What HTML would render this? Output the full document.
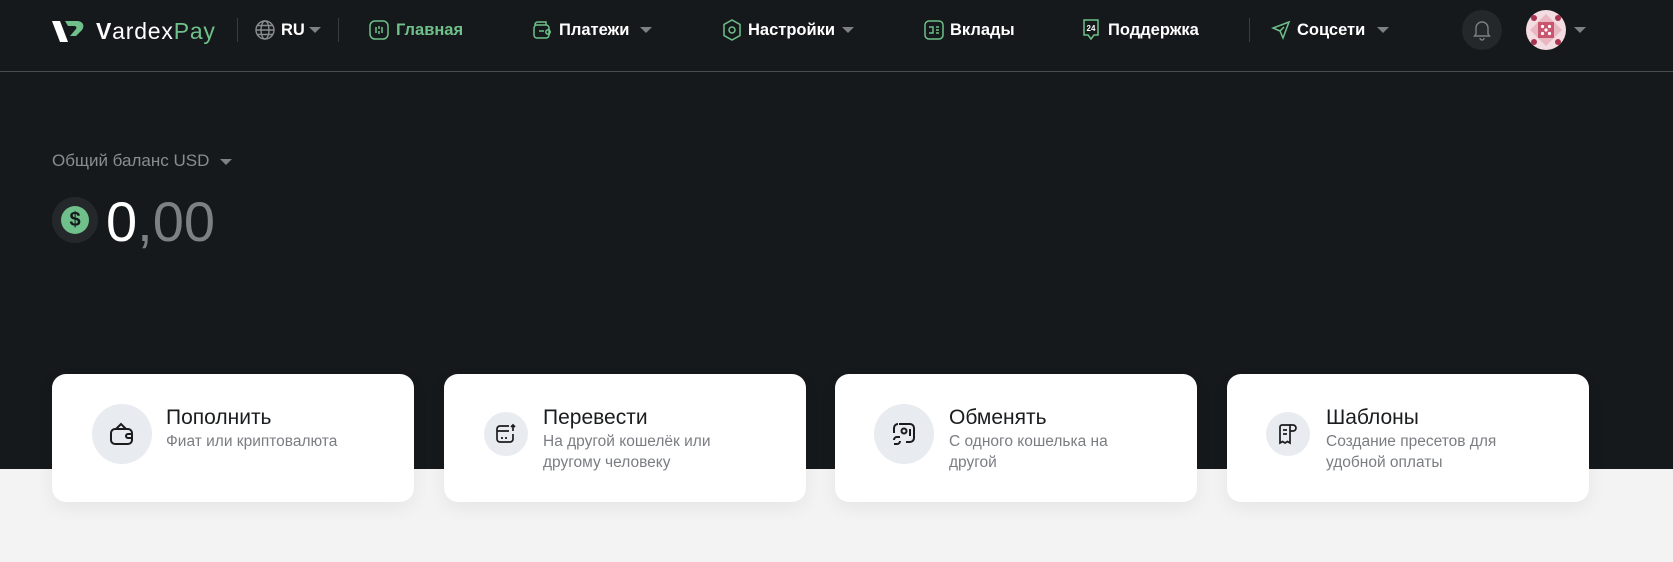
<!DOCTYPE html>
<html><head><meta charset="utf-8"><style>
*{margin:0;padding:0;box-sizing:border-box}
body{width:1673px;height:562px;overflow:hidden;background:#f3f3f3;font-family:"Liberation Sans",sans-serif;position:relative}
.dark{position:absolute;left:0;top:0;width:1673px;height:469px;background:#16191b}
.hline{position:absolute;left:0;top:71px;width:1673px;height:1px;background:#4a4d4f}
.a{position:absolute}
.nav{position:absolute;top:20px;font-size:16.5px;font-weight:bold;color:#fff;line-height:20px;white-space:nowrap}
.caret{position:absolute;top:27px;width:0;height:0;border-left:6px solid transparent;border-right:6px solid transparent;border-top:6px solid #7d8084}
.vd{position:absolute;top:18px;width:1px;height:24px;background:#3a3d40}
.card{position:absolute;top:374px;width:362px;height:128px;background:#fff;border-radius:14px;box-shadow:0 6px 18px rgba(0,0,0,.06)}
.ic{position:absolute;border-radius:50%;background:#e8ebf0;display:flex;align-items:center;justify-content:center}
.t{position:absolute;top:32px;font-size:21px;color:#1a1c1e;line-height:24px}
.s{position:absolute;top:57px;font-size:15.5px;color:#7a7d82;line-height:21px}
</style></head><body>
<div class="dark"></div>
<div class="hline"></div>
<svg class="a" style="left:51px;top:18px" width="36" height="26" viewBox="0 0 36 26"><path d="M1 3h8l8 21h-8z" fill="#fff"/><path d="M14 3h12c6 0 8 5 5 9l-6 6h-6l6-7c1-2 0-3-2-3h-6z" fill="#6fc08a"/></svg>
<div class="nav" style="left:96px;top:19px;font-size:23px;line-height:24px;font-weight:normal;letter-spacing:0.8px"><b>V</b>ardex<span style="color:#6fc08a">Pay</span></div>
<div class="vd" style="left:237px"></div>
<svg class="a" style="left:255px;top:20px" width="20" height="20" viewBox="0 0 20 20" fill="none" stroke="#8a8d90" stroke-width="1.4"><circle cx="10" cy="10" r="9"/><ellipse cx="10" cy="10" rx="4" ry="9"/><path d="M1 10h18M2.5 5.5h15M2.5 14.5h15"/></svg>
<div class="nav" style="left:281px">RU</div>
<div class="caret" style="left:309px"></div>
<div class="vd" style="left:338px"></div>
<svg class="a" style="left:369px;top:20px" width="20" height="20" viewBox="0 0 20 20" fill="none" stroke="#6fc08a" stroke-width="1.5"><rect x="1" y="1" width="18" height="18" rx="5"/><path d="M7 7v6M10 6v3M10 11v3M13 7v6"/></svg>
<div class="nav" style="left:396px;color:#6fc08a">Главная</div>
<svg class="a" style="left:532px;top:20px" width="20" height="20" viewBox="0 0 20 20" fill="none" stroke="#6fc08a" stroke-width="1.5"><path d="M3 5c0-2 1-3 3-3h8v3"/><rect x="2" y="5" width="15" height="13" rx="3"/><path d="M7 11h5"/><circle cx="16" cy="12" r="2.2"/></svg>
<div class="nav" style="left:559px">Платежи</div>
<div class="caret" style="left:640px"></div>
<svg class="a" style="left:722px;top:19px" width="20" height="22" viewBox="0 0 20 22" fill="none" stroke="#6fc08a" stroke-width="1.5"><path d="M10 1l8 4.5v11L10 21l-8-4.5v-11z"/><circle cx="10" cy="11" r="3"/></svg>
<div class="nav" style="left:748px">Настройки</div>
<div class="caret" style="left:842px"></div>
<svg class="a" style="left:924px;top:20px" width="20" height="20" viewBox="0 0 20 20" fill="none" stroke="#6fc08a" stroke-width="1.5"><rect x="1" y="1" width="18" height="18" rx="4"/><path d="M5 7h4v6H5M12 7h3M12 10h3M12 13h3"/></svg>
<div class="nav" style="left:950px">Вклады</div>
<svg class="a" style="left:1082px;top:19px" width="18" height="22" viewBox="0 0 18 22" fill="none" stroke="#6fc08a" stroke-width="1.5"><path d="M2 1h14v15h-4l-3 4-3-4H2z"/><text x="9" y="12" font-size="8" font-weight="bold" fill="#fff" stroke="none" text-anchor="middle" font-family="Liberation Sans">24</text></svg>
<div class="nav" style="left:1108px">Поддержка</div>
<div class="vd" style="left:1249px"></div>
<svg class="a" style="left:1271px;top:20px" width="20" height="20" viewBox="0 0 20 20" fill="none" stroke="#6fc08a" stroke-width="1.5"><path d="M18 2L2 8l7 3 3 7z"/><path d="M9 11l4-4"/></svg>
<div class="nav" style="left:1297px">Соцсети</div>
<div class="caret" style="left:1377px"></div>
<div class="a" style="left:1462px;top:10px;width:40px;height:40px;border-radius:50%;background:#25282a"></div>
<svg class="a" style="left:1472px;top:19px" width="20" height="22" viewBox="0 0 20 22" fill="none" stroke="#7d8084" stroke-width="1.4"><path d="M4 15V9a6 6 0 0112 0v6l1.5 2h-15z"/><path d="M8 19a2 2 0 004 0"/></svg>
<svg class="a" style="left:1526px;top:10px" width="40" height="40" viewBox="0 0 40 40"><circle cx="20" cy="20" r="20" fill="#f4dde2"/><path d="M20 4L36 20 20 36 4 20z" fill="#e8b8c2"/><rect x="12" y="12" width="16" height="16" fill="#c9566f"/><g fill="#fff"><circle cx="16.5" cy="16.5" r="1.6"/><circle cx="23.5" cy="16.5" r="1.6"/><circle cx="16.5" cy="23.5" r="1.6"/><circle cx="23.5" cy="23.5" r="1.6"/><circle cx="20" cy="20" r="1.6"/></g><g fill="#a8324f"><circle cx="8" cy="8" r="3"/><circle cx="32" cy="8" r="3"/><circle cx="8" cy="32" r="3"/><circle cx="32" cy="32" r="3"/></g></svg>
<div class="caret" style="left:1574px"></div>

<div class="a" style="left:52px;top:151px;font-size:17px;color:#8a8d90">Общий баланс USD</div>
<div class="caret" style="left:220px;top:159px"></div>
<div class="a" style="left:52px;top:197px;width:46px;height:46px;border-radius:50%;background:#25282a"></div>
<div class="a" style="left:61px;top:206px;width:28px;height:28px;border-radius:50%;background:#6fc08a;color:#16191b;font-weight:bold;font-size:20px;text-align:center;line-height:28px">$</div>
<div class="a" style="left:106px;top:190px;font-size:56px;line-height:64px;color:#fff">0<span style="color:#7d8084">,00</span></div>

<div class="card" style="left:52px">
<div class="ic" style="left:40px;top:30px;width:60px;height:60px"><svg width="28" height="28" viewBox="0 0 28 28" fill="none" stroke="#1a1c1e" stroke-width="2"><path d="M8 9l5-5 5 5"/><rect x="3" y="9" width="21" height="15" rx="4"/><path d="M24 14h-4a2 2 0 000 4h4"/></svg></div>
<div class="t" style="left:114px">Пополнить</div>
<div class="s" style="left:114px">Фиат или криптовалюта</div></div>
<div class="card" style="left:444px">
<div class="ic" style="left:40px;top:38px;width:44px;height:44px"><svg width="22" height="22" viewBox="0 0 22 22" fill="none" stroke="#1a1c1e" stroke-width="1.7"><path d="M14 3H5a3 3 0 00-3 3v10a3 3 0 003 3h10a3 3 0 003-3v-5"/><path d="M2 8h12M6 15h2M10 15h2M18 2v6M16 4l2-2 2 2"/></svg></div>
<div class="t" style="left:99px">Перевести</div>
<div class="s" style="left:99px">На другой кошелёк или<br>другому человеку</div></div>
<div class="card" style="left:835px">
<div class="ic" style="left:39px;top:30px;width:60px;height:60px"><svg width="28" height="28" viewBox="0 0 28 28" fill="none" stroke="#1a1c1e" stroke-width="2"><path d="M9 4h11a4 4 0 014 4v10a4 4 0 01-4 4h-4"/><path d="M4 13V8a4 4 0 014-4"/><circle cx="14" cy="11" r="2.5"/><path d="M20 9v7"/><path d="M4 20a3 3 0 013-3h3M10 21a3 3 0 01-3 3H4"/></svg></div>
<div class="t" style="left:114px">Обменять</div>
<div class="s" style="left:114px">С одного кошелька на<br>другой</div></div>
<div class="card" style="left:1227px">
<div class="ic" style="left:39px;top:38px;width:44px;height:44px"><svg width="22" height="22" viewBox="0 0 22 22" fill="none" stroke="#1a1c1e" stroke-width="1.7"><path d="M13 2H5a2 2 0 00-2 2v16l2.5-1.5L8 20l2.5-1.5L13 20V2z"/><path d="M13 2h3a3 3 0 010 6h-3M6 7h4M6 11h4"/></svg></div>
<div class="t" style="left:99px">Шаблоны</div>
<div class="s" style="left:99px">Создание пресетов для<br>удобной оплаты</div></div>
</body></html>
